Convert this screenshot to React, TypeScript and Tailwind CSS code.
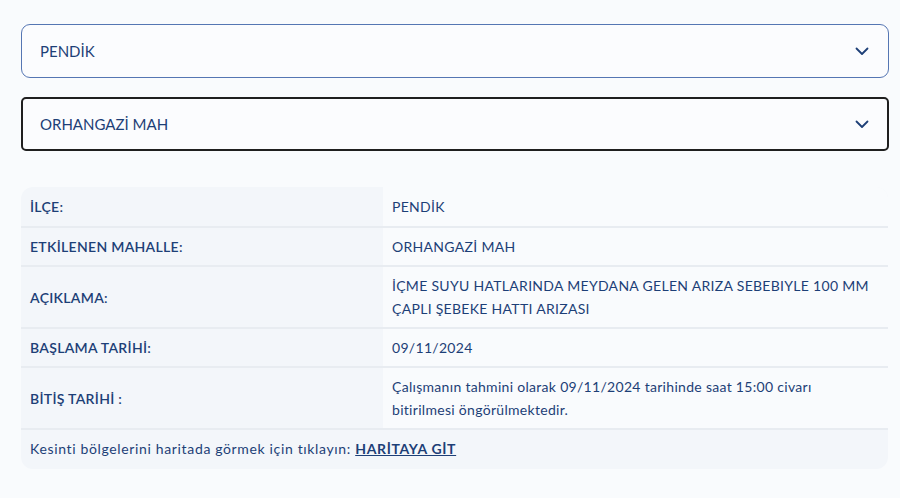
import { useState } from "react";

const rows: { label: string; value: string }[] = [
  { label: "İLÇE:", value: "PENDİK" },
  { label: "ETKİLENEN MAHALLE:", value: "ORHANGAZİ MAH" },
  {
    label: "AÇIKLAMA:",
    value: "İÇME SUYU HATLARINDA MEYDANA GELEN ARIZA SEBEBIYLE 100 MM ÇAPLI ŞEBEKE HATTI ARIZASI",
  },
  { label: "BAŞLAMA TARİHİ:", value: "09/11/2024" },
  {
    label: "BİTİŞ TARİHİ :",
    value: "Çalışmanın tahmini olarak 09/11/2024 tarihinde saat 15:00 civarı bitirilmesi öngörülmektedir.",
  },
];

function Chevron() {
  return (
    <svg width="16" height="16" viewBox="0 0 16 16" fill="none" className="text-[#1d3f77]">
      <path d="M2.5 5.5 8 11l5.5-5.5" stroke="currentColor" strokeWidth="1.8" strokeLinecap="round" strokeLinejoin="round" />
    </svg>
  );
}

function Select({ value, active }: { value: string; active?: boolean }) {
  return (
    <button
      className={
        active
          ? "flex h-[54px] w-full items-center justify-between rounded-[5px] border-2 border-[#1f1f1f] bg-[#fbfcfe] px-[17px] text-left"
          : "flex h-[54px] w-full items-center justify-between rounded-[9px] border border-[#5576b3] bg-[#fbfcfe] px-[18px] text-left"
      }
    >
      <span className="text-[15px] text-[#1d3f77]">{value}</span>
      <Chevron />
    </button>
  );
}

export default function App() {
  const [district] = useState("PENDİK");

  return (
    <div className="min-h-[498px] w-full bg-[#f9fbfd] font-['Lato',sans-serif] text-[#1d3f77]">
      <div className="flex flex-col pl-[21px] pr-[11px] pt-[24px]">
        {/* Filters */}
        <div className="flex flex-col gap-[19px]">
          <Select value={district} />
          <Select value="ORHANGAZİ MAH" active />
        </div>

        {/* Detail table */}
        <div className="mt-[36px] mr-[1px] overflow-hidden rounded-[12px] bg-[#f3f6fa] text-[14px] leading-[23px] tracking-[0.3px]">
          {rows.map((r, i) => (
            <div
              key={r.label}
              className={
                i > 0
                  ? "grid min-h-[39px] grid-cols-[362px_1fr] border-t-2 border-[#e8ecf1]"
                  : "grid min-h-[39px] grid-cols-[362px_1fr]"
              }
            >
              <div className="flex items-center px-[9px] py-[7px] font-semibold">{r.label}</div>
              <div className="flex items-center bg-[#f9fbfd] py-[7px] pl-[9px] pr-[18px]">{r.value}</div>
            </div>
          ))}
          <div className="border-t-2 border-[#e8ecf1] px-[9px] pt-[7px] pb-[9px] tracking-[0.65px]">
            Kesinti bölgelerini haritada görmek için tıklayın:{" "}
            <a href="#" className="font-bold underline">
              HARİTAYA GİT
            </a>
          </div>
        </div>
      </div>
    </div>
  );
}
